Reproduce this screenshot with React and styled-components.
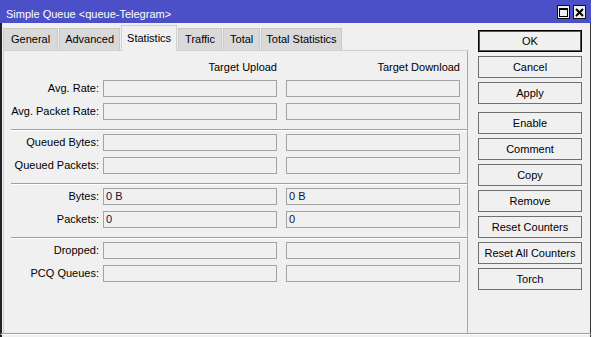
import React from "react";
import styled, { createGlobalStyle } from "styled-components";

const GlobalStyle = createGlobalStyle`
  * { box-sizing: border-box; }
  body {
    margin: 0;
    background: #fff;
    font-family: "Liberation Sans", Arial, sans-serif;
    font-size: 11px;
    color: #000;
  }
`;

const Window = styled.div`
  width: 591px;
  height: 337px;
  display: flex;
  flex-direction: column;
  background: #f0f0f0;
  overflow: hidden;
`;

const TitleBar = styled.div`
  height: 23px;
  flex: none;
  display: flex;
  align-items: flex-start;
  padding: 0 5px 0 6px;
  background: #4b50c8;
  color: #fff;
`;

const Title = styled.span`
  margin-top: 8px;
  line-height: 13px;
  white-space: nowrap;
`;

const TitleControls = styled.div`
  margin-left: auto;
  margin-top: 5px;
  display: flex;
  gap: 3px;
`;

const TitleButton = styled.div`
  width: 13px;
  height: 14px;
  display: flex;
  align-items: center;
  justify-content: center;
  background: #f0f0f0;
  border: 1px solid #111;
`;

const Body = styled.div`
  display: flex;
  border-left: 2px solid #222;
  border-right: 1px solid #333;
  border-bottom: 1px solid #a0a0a0;
`;

const Footer = styled.div`
  flex: 1;
  border-left: 2px solid #222;
  border-right: 1px solid #333;
  border-top: 1px solid #fff;
`;

const TabArea = styled.div`
  width: 465px;
  margin-left: 1px;
  display: flex;
  flex-direction: column;
`;

const TabRow = styled.div`
  height: 27px;
  display: flex;
  align-items: flex-end;
  gap: 1px;
`;

const Tab = styled.div`
  position: relative;
  height: ${({ $active }) => ($active ? "26px" : "22px")};
  line-height: ${({ $active }) => ($active ? "24px" : "21px")};
  margin-bottom: ${({ $active }) => ($active ? "-1px" : "0")};
  padding: 0 ${({ $pad }) => $pad || 5}px;
  border: 1px solid ${({ $active }) => ($active ? "#d0d0d0" : "#c9c9c9")};
  border-bottom: none;
  background: ${({ $active }) => ($active ? "#f0f0f0" : "#d9d9d9")};
  white-space: nowrap;
  z-index: ${({ $active }) => ($active ? 1 : 0)};
`;

const Panel = styled.div`
  height: 283px;
  padding-top: 9px;
  border-top: 1px solid #d0d0d0;
  border-left: 1px solid #d0d0d0;
  border-right: 1px solid #a8a8a8;
`;

const Row = styled.div`
  display: flex;
  align-items: center;
  height: ${({ $header }) => ($header ? "14px" : "17px")};
  margin-bottom: ${({ $header }) => ($header ? "6px" : "0")};
`;

const Label = styled.div`
  width: 99px;
  padding-right: 4px;
  text-align: right;
  line-height: 17px;
  white-space: nowrap;
`;

const ColumnTitle = styled.div`
  width: 174px;
  text-align: right;
  line-height: 14px;
  & + & {
    margin-left: 9px;
  }
`;

const Field = styled.div`
  width: 174px;
  height: 17px;
  padding-left: 2px;
  border: 1px solid #a3a3a3;
  line-height: 15px;
  color: #101038;
  & + & {
    margin-left: 9px;
  }
`;

const Group = styled.div`
  display: flex;
  flex-direction: column;
  gap: 6px;
`;

const Separator = styled.div`
  height: 2px;
  margin: 9px 0 3px 7px;
  border-top: 1px solid #a0a0a0;
  border-bottom: 1px solid #fff;
`;

const ButtonColumn = styled.div`
  display: flex;
  flex-direction: column;
  gap: 4px;
  padding: 7px 0 0 10px;
`;

const Button = styled.div`
  width: 104px;
  height: 22px;
  line-height: 20px;
  text-align: center;
  border: 1px solid ${({ $primary }) => ($primary ? "#000" : "#707070")};
  box-shadow: ${({ $primary }) => ($primary ? "inset 0 0 0 1px #555" : "none")};
  margin-top: ${({ $spaced }) => ($spaced ? "4px" : "0")};
  background: #f0f0f0;
  white-space: nowrap;
`;

// tab label with its horizontal padding
const tabs = [
  ["General", 7],
  ["Advanced", 5],
  ["Statistics", 5],
  ["Traffic", 6],
  ["Total", 6],
  ["Total Statistics", 4],
];

const groups = [
  [
    { label: "Avg. Rate:", up: "", down: "" },
    { label: "Avg. Packet Rate:", up: "", down: "" },
  ],
  [
    { label: "Queued Bytes:", up: "", down: "" },
    { label: "Queued Packets:", up: "", down: "" },
  ],
  [
    { label: "Bytes:", up: "0 B", down: "0 B" },
    { label: "Packets:", up: "0", down: "0" },
  ],
  [
    { label: "Dropped:", up: "", down: "" },
    { label: "PCQ Queues:", up: "", down: "" },
  ],
];

const buttons = [
  "OK",
  "Cancel",
  "Apply",
  "Enable",
  "Comment",
  "Copy",
  "Remove",
  "Reset Counters",
  "Reset All Counters",
  "Torch",
];

const App = () => {
  return (
    <>
      <GlobalStyle />
      <Window>
        <TitleBar>
          <Title>Simple Queue &lt;queue-Telegram&gt;</Title>
          <TitleControls>
            <TitleButton>
              <svg width="9" height="9" viewBox="0 0 9 9">
                <rect x="0.5" y="0.5" width="8" height="8" fill="none" stroke="#000" />
                <line x1="0" y1="1.5" x2="9" y2="1.5" stroke="#000" />
              </svg>
            </TitleButton>
            <TitleButton>
              <svg width="9" height="9" viewBox="0 0 9 9">
                <path d="M1 1 L8 8 M8 1 L1 8" stroke="#000" strokeWidth="2" />
              </svg>
            </TitleButton>
          </TitleControls>
        </TitleBar>

        <Body>
          <TabArea>
            <TabRow>
              {tabs.map(([t, pad]) => (
                <Tab key={t} $pad={pad} $active={t === "Statistics"}>
                  {t}
                </Tab>
              ))}
            </TabRow>
            <Panel>
              <Row $header>
                <Label />
                <ColumnTitle>Target Upload</ColumnTitle>
                <ColumnTitle>Target Download</ColumnTitle>
              </Row>
              {groups.map((group, i) => (
                <React.Fragment key={i}>
                  {i > 0 && <Separator />}
                  <Group>
                    {group.map((row) => (
                      <Row key={row.label}>
                        <Label>{row.label}</Label>
                        <Field>{row.up}</Field>
                        <Field>{row.down}</Field>
                      </Row>
                    ))}
                  </Group>
                </React.Fragment>
              ))}
            </Panel>
          </TabArea>

          <ButtonColumn>
            {buttons.map((b) => (
              <Button key={b} $primary={b === "OK"} $spaced={b === "Enable"}>
                {b}
              </Button>
            ))}
          </ButtonColumn>
        </Body>
        <Footer />
      </Window>
    </>
  );
};

export default App;
